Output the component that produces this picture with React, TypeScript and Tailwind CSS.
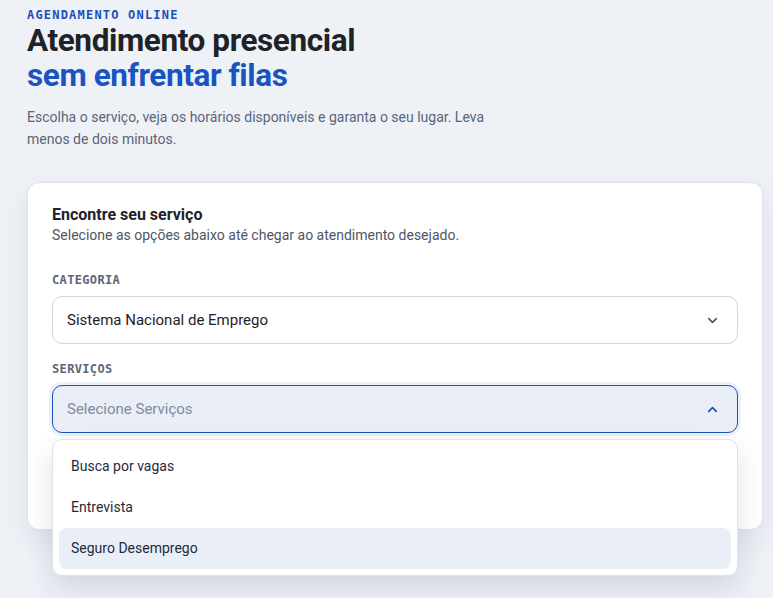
import React from "react";

function Chevron({ up, className }: { up?: boolean; className?: string }) {
  return (
    <svg width="15" height="15" viewBox="0 0 24 24" fill="none" stroke="currentColor" strokeWidth="2.6" strokeLinecap="round" strokeLinejoin="round" className={className}>
      {up ? <path d="M6 15l6-6 6 6" /> : <path d="M6 9l6 6 6-6" />}
    </svg>
  );
}

const mono = { fontFamily: '"DejaVu Sans Mono", "Liberation Mono", monospace' };

export default function App() {
  const options = ["Busca por vagas", "Entrevista", "Seguro Desemprego"];
  return (
    <div className="min-h-[598px] w-full bg-[#eef1f6] pl-[27px] pr-[10px] pt-[8px]" style={{ fontFamily: 'Roboto, "Noto Sans", sans-serif' }}>
      <div className="text-[12px] font-bold leading-[14px] tracking-[1.2px] text-[#1d4fb8]" style={mono}>
        AGENDAMENTO ONLINE
      </div>
      <h1 className="mt-[1px] text-[31.5px] font-bold leading-[35px] tracking-[-0.4px] text-[#1f2227]">
        Atendimento presencial
        <br />
        <span className="text-[#1a54c2]">sem enfrentar filas</span>
      </h1>
      <p className="mt-[13px] max-w-[470px] text-[14px] leading-[22px] text-[#5b6578]">
        Escolha o serviço, veja os horários disponíveis e garanta o seu lugar. Leva menos de dois minutos.
      </p>

      <div className="mt-[32px] h-[348px] w-[736px] rounded-[12px] border border-[#dde2ea] bg-white px-[24px] pt-[22px] shadow-[0_10px_30px_rgba(30,50,90,0.08)]">
        <div className="text-[16px] font-bold leading-[20px] text-[#1f2227]">Encontre seu serviço</div>
        <div className="mt-[1px] text-[14px] leading-[18px] text-[#4d5667]">
          Selecione as opções abaixo até chegar ao atendimento desejado.
        </div>

        <div className="mt-[29px] text-[12px] font-bold leading-[14px] tracking-[0.35px] text-[#5b6578]" style={mono}>
          CATEGORIA
        </div>
        <div className="mt-[9px] flex h-[48px] items-center justify-between rounded-[10px] border border-[#cfd6e2] bg-white pl-[14px] pr-[17px]">
          <span className="text-[15px] text-[#1f2227]">Sistema Nacional de Emprego</span>
          <Chevron className="text-[#4d5667]" />
        </div>

        <div className="mt-[18px] text-[12px] font-bold leading-[14px] tracking-[0.35px] text-[#5b6578]" style={mono}>
          SERVIÇOS
        </div>
        <div className="relative mt-[9px]">
          <div className="flex h-[48px] items-center justify-between rounded-[10px] border-[1.5px] border-[#1d4fb8] bg-[#e9eef7] pl-[14px] pr-[17px] shadow-[0_0_0_3px_rgba(29,79,184,0.08)]">
            <span className="text-[15px] text-[#7f8aa1]">Selecione Serviços</span>
            <Chevron up className="text-[#1d4fb8]" />
          </div>
          <div className="absolute left-0 right-0 top-[54px] z-10 rounded-[10px] border border-[#dfe4ec] bg-white p-[6px] shadow-[0_12px_28px_rgba(30,50,90,0.14)]">
            {options.map((o, i) => (
              <div
                key={o}
                className={
                  i === 2
                    ? "flex h-[41px] items-center rounded-[8px] bg-[#eaeef7] px-[12px] text-[14px] text-[#1f2a3c]"
                    : "flex h-[41px] items-center rounded-[8px] px-[12px] text-[14px] text-[#1f2a3c]"
                }
              >
                {o}
              </div>
            ))}
          </div>
        </div>
      </div>
    </div>
  );
}
